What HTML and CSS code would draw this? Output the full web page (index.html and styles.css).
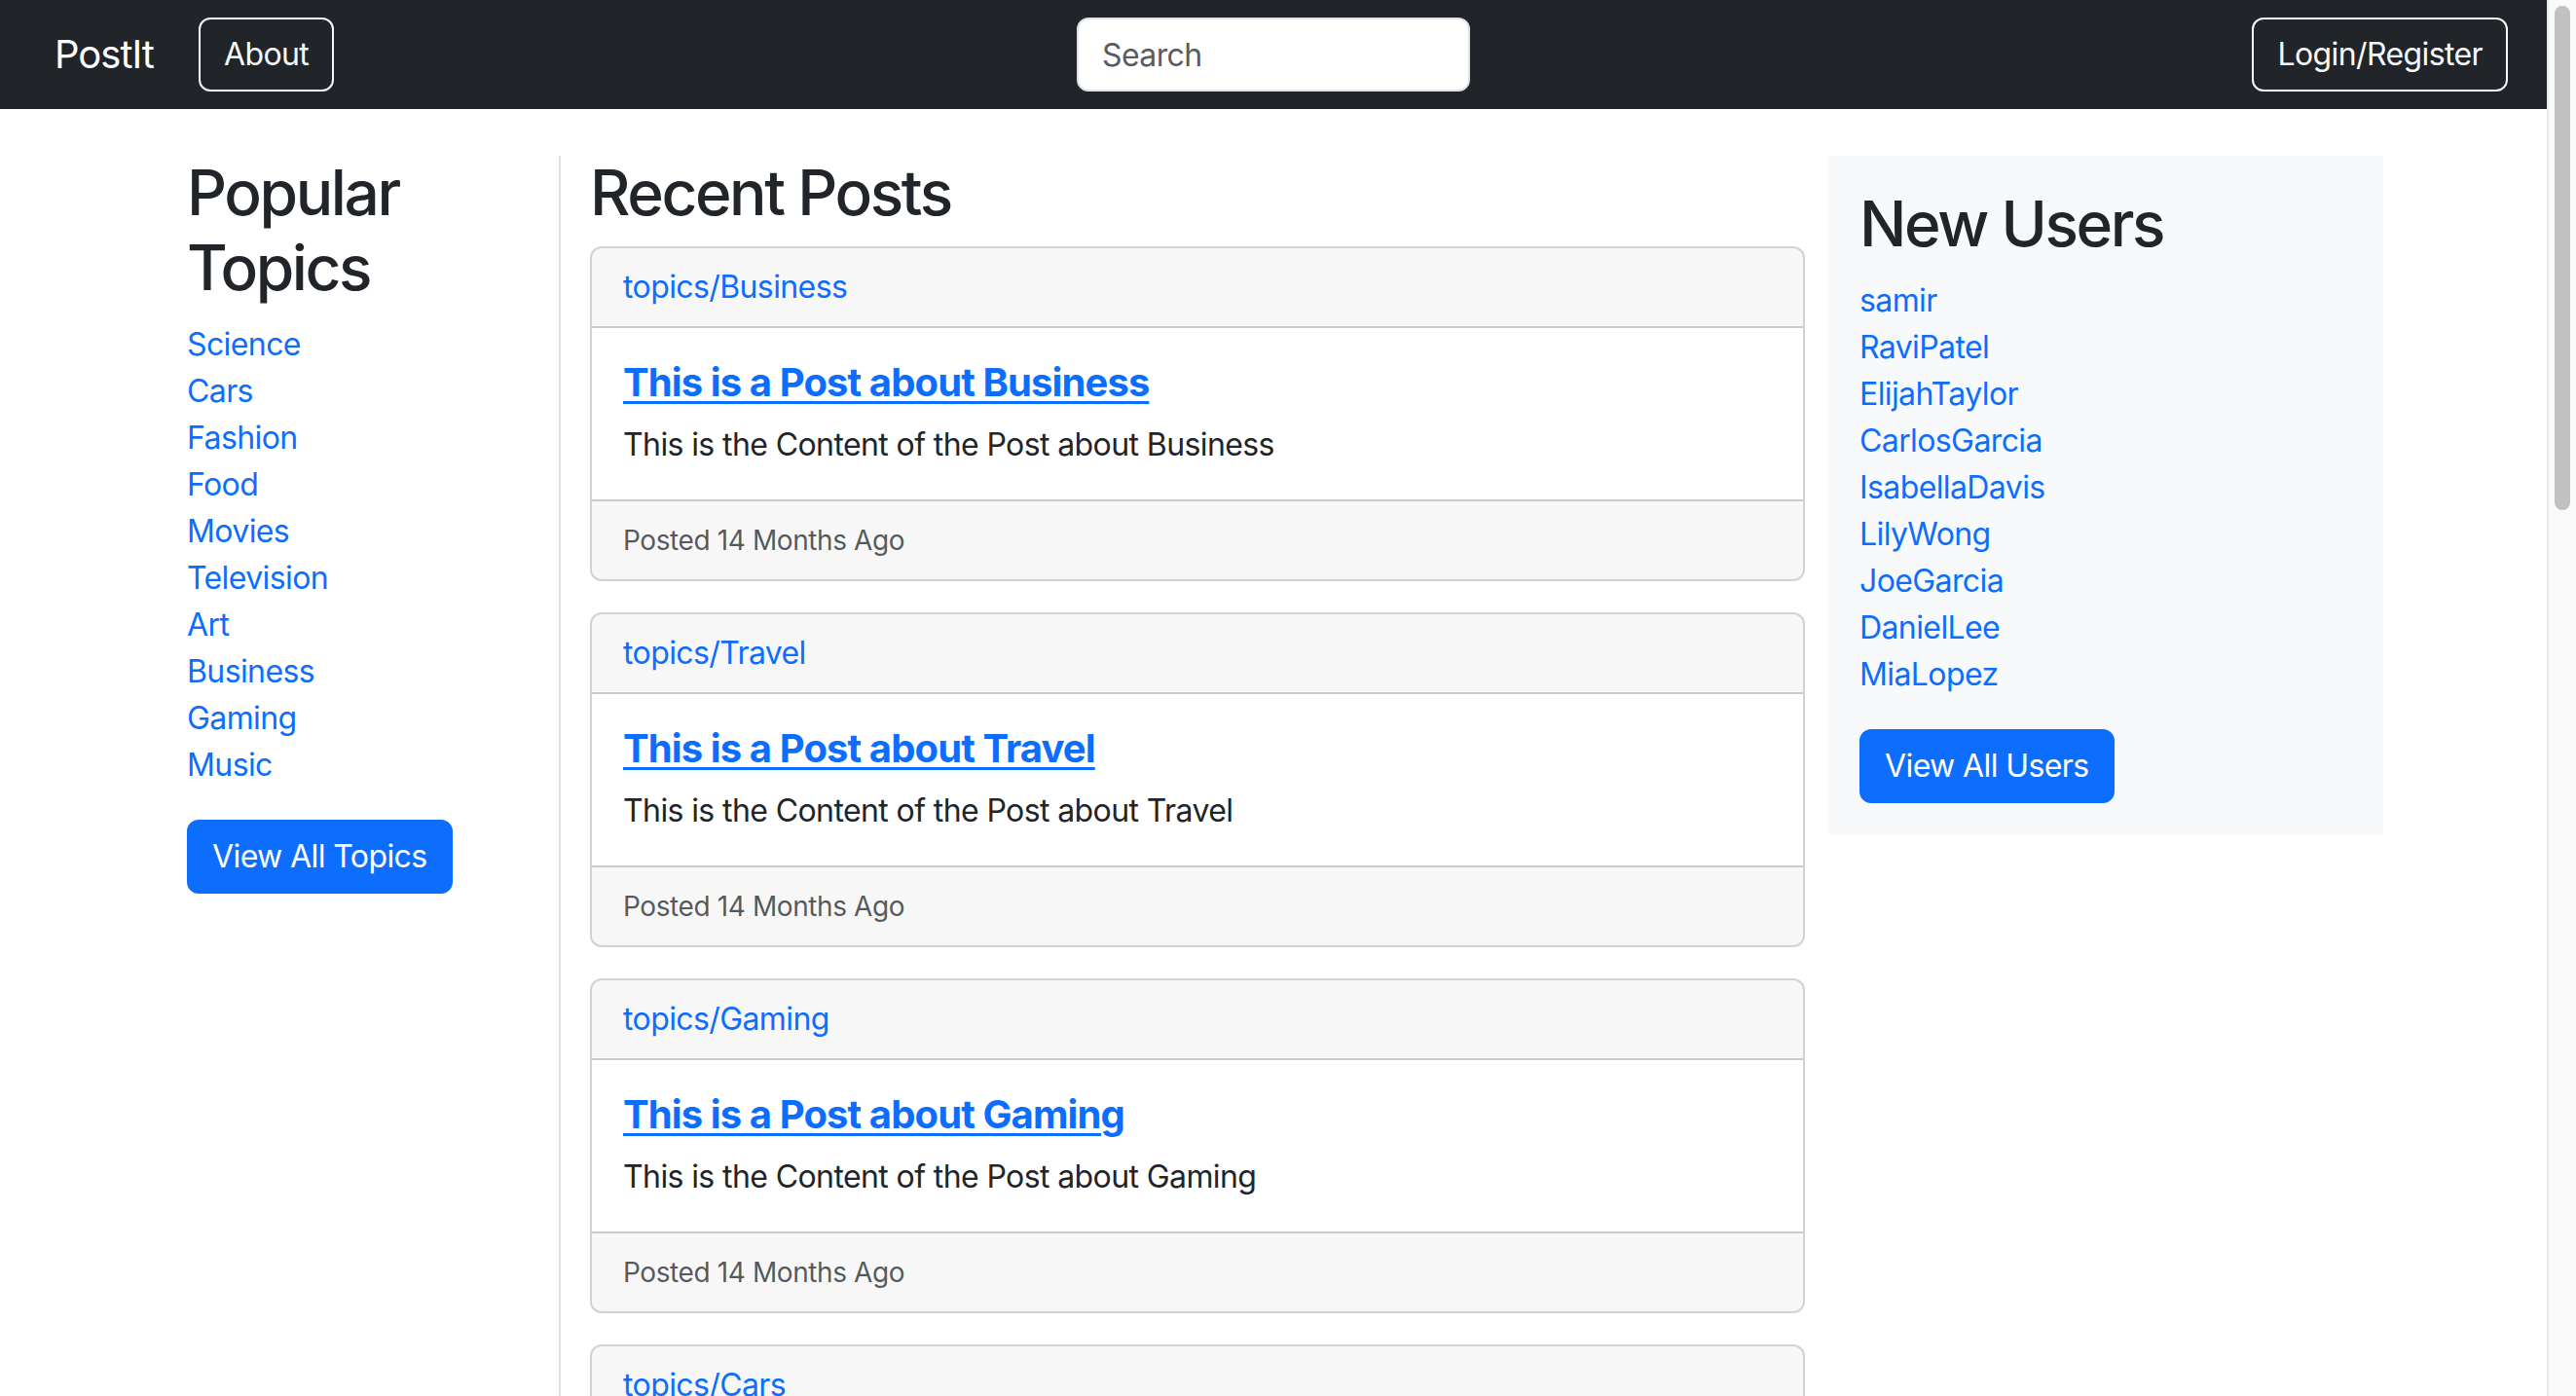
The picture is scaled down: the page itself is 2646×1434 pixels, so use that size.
FILE: index.html
```html
<!DOCTYPE html>
<html lang="en">
<head>
<meta charset="utf-8">
<title>PostIt</title>
<link rel="stylesheet" href="styles.css">
</head>
<body>
<nav class="navbar">
  <div class="nav-left">
    <a class="brand" href="#">PostIt</a>
    <a class="btn btn-outline" href="#">About</a>
  </div>
  <div class="nav-center">
    <input class="search" type="text" placeholder="Search">
  </div>
  <div class="nav-right">
    <a class="btn btn-outline" href="#">Login/Register</a>
  </div>
</nav>

<main class="page">
  <aside class="topics">
    <h2 class="heading">Popular Topics</h2>
    <ul class="link-list">
      <li><a href="#">Science</a></li>
      <li><a href="#">Cars</a></li>
      <li><a href="#">Fashion</a></li>
      <li><a href="#">Food</a></li>
      <li><a href="#">Movies</a></li>
      <li><a href="#">Television</a></li>
      <li><a href="#">Art</a></li>
      <li><a href="#">Business</a></li>
      <li><a href="#">Gaming</a></li>
      <li><a href="#">Music</a></li>
    </ul>
    <a class="btn btn-primary" href="#">View All Topics</a>
  </aside>

  <section class="posts">
    <h2 class="heading">Recent Posts</h2>

    <article class="card">
      <div class="card-header"><a href="#">topics/Business</a></div>
      <div class="card-body">
        <h5 class="card-title"><a href="#">This is a Post about Business</a></h5>
        <p class="card-text">This is the Content of the Post about Business</p>
      </div>
      <div class="card-footer">Posted 14 Months Ago</div>
    </article>

    <article class="card">
      <div class="card-header"><a href="#">topics/Travel</a></div>
      <div class="card-body">
        <h5 class="card-title"><a href="#">This is a Post about Travel</a></h5>
        <p class="card-text">This is the Content of the Post about Travel</p>
      </div>
      <div class="card-footer">Posted 14 Months Ago</div>
    </article>

    <article class="card">
      <div class="card-header"><a href="#">topics/Gaming</a></div>
      <div class="card-body">
        <h5 class="card-title"><a href="#">This is a Post about Gaming</a></h5>
        <p class="card-text">This is the Content of the Post about Gaming</p>
      </div>
      <div class="card-footer">Posted 14 Months Ago</div>
    </article>

    <article class="card">
      <div class="card-header"><a href="#">topics/Cars</a></div>
      <div class="card-body">
        <h5 class="card-title"><a href="#">This is a Post about Cars</a></h5>
        <p class="card-text">This is the Content of the Post about Cars</p>
      </div>
      <div class="card-footer">Posted 14 Months Ago</div>
    </article>

    <article class="card">
      <div class="card-header"><a href="#">topics/Science</a></div>
      <div class="card-body">
        <h5 class="card-title"><a href="#">This is a Post about Science</a></h5>
        <p class="card-text">This is the Content of the Post about Science</p>
      </div>
      <div class="card-footer">Posted 14 Months Ago</div>
    </article>

    <article class="card">
      <div class="card-header"><a href="#">topics/Fashion</a></div>
      <div class="card-body">
        <h5 class="card-title"><a href="#">This is a Post about Fashion</a></h5>
        <p class="card-text">This is the Content of the Post about Fashion</p>
      </div>
      <div class="card-footer">Posted 14 Months Ago</div>
    </article>

    <article class="card">
      <div class="card-header"><a href="#">topics/Food</a></div>
      <div class="card-body">
        <h5 class="card-title"><a href="#">This is a Post about Food</a></h5>
        <p class="card-text">This is the Content of the Post about Food</p>
      </div>
      <div class="card-footer">Posted 14 Months Ago</div>
    </article>

    <article class="card">
      <div class="card-header"><a href="#">topics/Movies</a></div>
      <div class="card-body">
        <h5 class="card-title"><a href="#">This is a Post about Movies</a></h5>
        <p class="card-text">This is the Content of the Post about Movies</p>
      </div>
      <div class="card-footer">Posted 14 Months Ago</div>
    </article>
  </section>

  <aside class="users">
    <h2 class="heading">New Users</h2>
    <ul class="link-list">
      <li><a href="#">samir</a></li>
      <li><a href="#">RaviPatel</a></li>
      <li><a href="#">ElijahTaylor</a></li>
      <li><a href="#">CarlosGarcia</a></li>
      <li><a href="#">IsabellaDavis</a></li>
      <li><a href="#">LilyWong</a></li>
      <li><a href="#">JoeGarcia</a></li>
      <li><a href="#">DanielLee</a></li>
      <li><a href="#">MiaLopez</a></li>
    </ul>
    <a class="btn btn-primary" href="#">View All Users</a>
  </aside>
</main>

<div class="scrollbar" aria-hidden="true"><div class="scrollbar-thumb"></div></div>
</body>
</html>
```

FILE: styles.css
```css
html {
  background: #ffffff;
  scrollbar-width: none;
}

html::-webkit-scrollbar {
  display: none;
}

body {
  margin: 0 30px 0 0;
  font-family: "Inter", "Helvetica Neue", "Liberation Sans", sans-serif;
  font-size: 32px;
  line-height: 48px;
  letter-spacing: -0.6px;
  color: #212529;
  background: #ffffff;
  padding-bottom: 100px;
}

a {
  color: #0d6efd;
  text-decoration: none;
}

/* ---------- fake page scrollbar (overlays the right edge) ---------- */
.scrollbar {
  position: fixed;
  top: 0;
  right: 0;
  bottom: 0;
  width: 28px;
  background: #fafafa;
  border-left: 2px solid #e8e8e8;
}

.scrollbar-thumb {
  margin: 6px 6px 0 6px;
  height: 518px;
  border-radius: 8px;
  background: #c1c1c1;
}

/* ---------- navbar ---------- */
.navbar {
  height: 112px;
  box-sizing: border-box;
  background: #212529;
  padding: 0 40px;
  display: grid;
  grid-template-columns: 1fr auto 1fr;
  align-items: center;
}

.nav-left {
  display: flex;
  align-items: center;
}

.nav-right {
  display: flex;
  justify-content: flex-end;
}

.brand {
  color: #ffffff;
  font-size: 40px;
  line-height: 60px;
  margin-left: 16px;
  margin-right: 46px;
  letter-spacing: -1px;
}

.btn {
  display: inline-block;
  box-sizing: border-box;
  font-size: 32px;
  line-height: 48px;
  padding: 12px 24px;
  border: 2px solid transparent;
  border-radius: 12px;
  white-space: nowrap;
}

.btn-outline {
  color: #f8f9fa;
  border-color: #f8f9fa;
}

.btn-primary {
  color: #ffffff;
  background: #0d6efd;
  border-color: #0d6efd;
}

.search {
  display: block;
  width: 404px;
  height: 76px;
  box-sizing: border-box;
  padding: 12px 24px;
  font-family: inherit;
  font-size: 32px;
  line-height: 48px;
  letter-spacing: -0.6px;
  color: #212529;
  background: #ffffff;
  border: 2px solid #dee2e6;
  border-radius: 12px;
  outline: none;
}

.search::placeholder {
  color: #595c5f;
}

/* ---------- page ---------- */
.page {
  width: 2280px;
  margin: 48px auto 0;
  display: flex;
  align-items: stretch;
}

.heading {
  margin: 0 0 16px;
  font-size: 64px;
  line-height: 76.8px;
  font-weight: 500;
  letter-spacing: -2.4px;
}

.link-list {
  list-style: none;
  margin: 0 0 32px;
  padding: 0;
}

.topics {
  width: 406px;
  flex: none;
  box-sizing: border-box;
  padding: 0 24px;
}

.posts {
  width: 1304px;
  flex: none;
  box-sizing: border-box;
  border-left: 2px solid #dee2e6;
  padding: 0 24px 0 30px;
}

.users {
  width: 570px;
  flex: none;
  box-sizing: border-box;
  align-self: flex-start;
  background: #f8f9fa;
  padding: 32px;
}

/* ---------- cards ---------- */
.card {
  border: 2px solid rgba(0, 0, 0, 0.175);
  border-radius: 12px;
  margin-bottom: 32px;
  overflow: hidden;
}

.card-header {
  padding: 16px 32px;
  background: rgba(0, 0, 0, 0.03);
  border-bottom: 2px solid rgba(0, 0, 0, 0.175);
}

.card-body {
  padding: 32px;
}

.card-title {
  margin: 0 0 16px;
  font-size: 40px;
  line-height: 48px;
  font-weight: 700;
  letter-spacing: -0.9px;
}

.card-title a {
  text-decoration: underline;
  text-decoration-thickness: 3px;
  text-underline-offset: 5px;
}

.card-text {
  margin: 0;
}

.card-footer {
  padding: 16px 32px;
  background: rgba(0, 0, 0, 0.03);
  border-top: 2px solid rgba(0, 0, 0, 0.175);
  color: rgba(33, 37, 41, 0.75);
  font-size: 28px;
  line-height: 48px;
  letter-spacing: -0.4px;
}
```
